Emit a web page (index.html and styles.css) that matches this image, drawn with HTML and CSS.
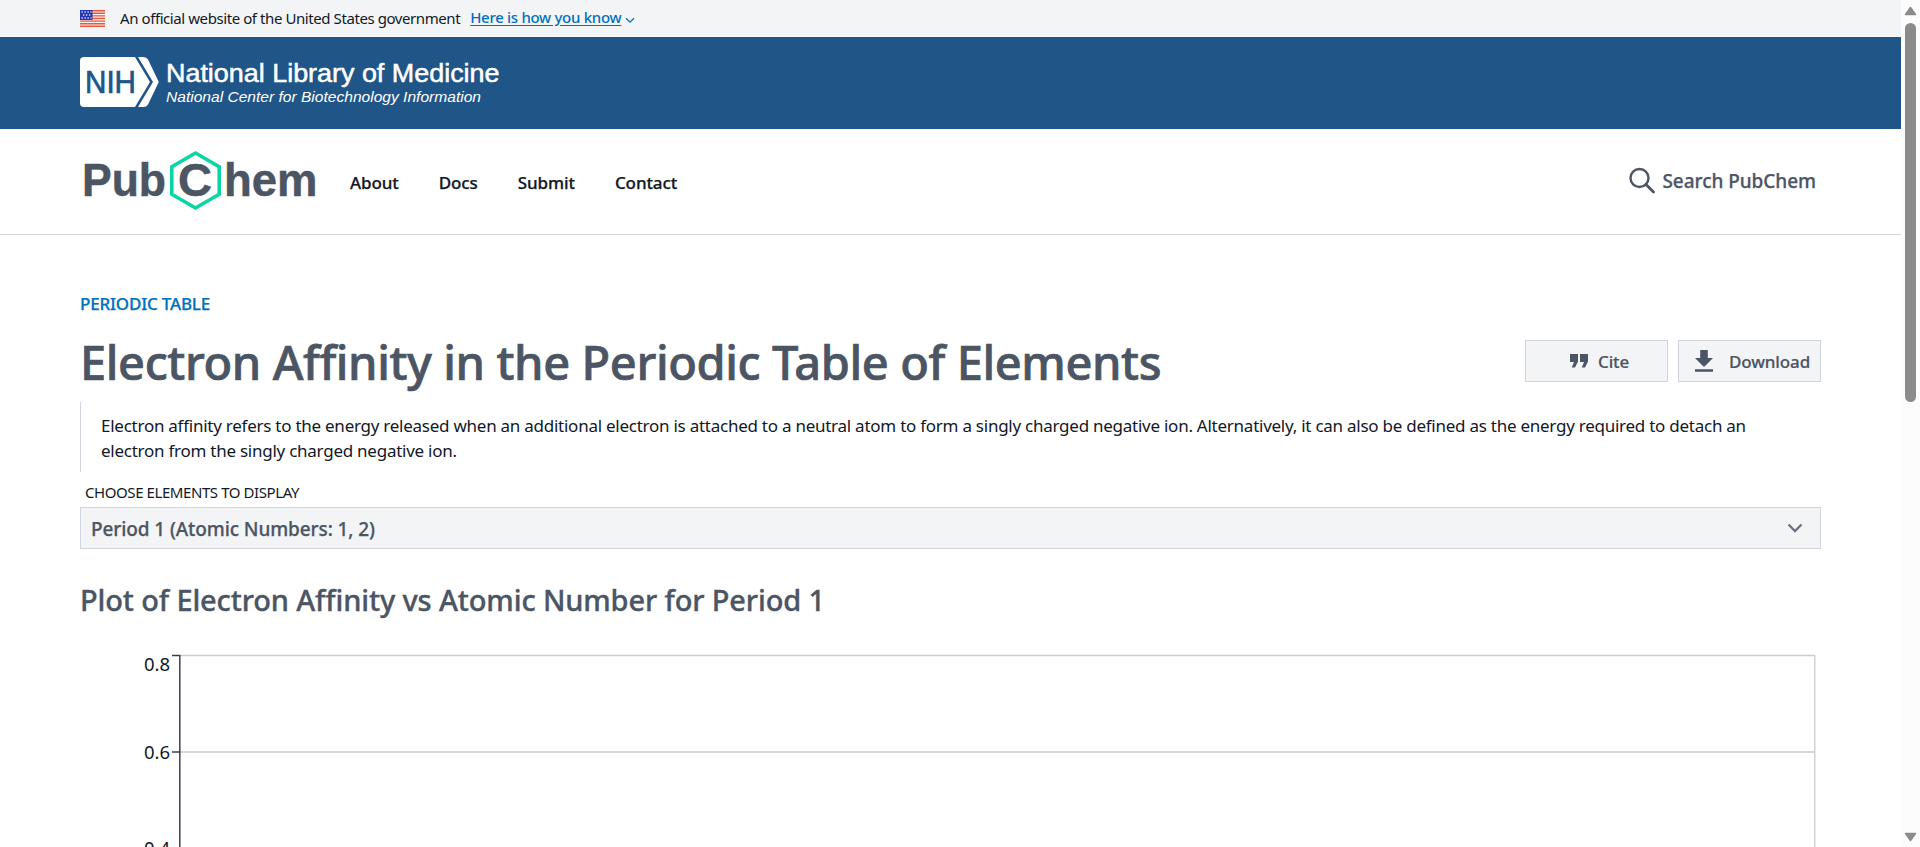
FILE: index.html
```html
<!DOCTYPE html>
<html lang="en">
<head>
<meta charset="utf-8">
<title>Electron Affinity | Periodic Table of Elements | PubChem</title>
<link rel="stylesheet" href="styles.css">
</head>
<body>
<div class="page">
  <div class="gov-banner">
    <svg class="flag" width="25" height="17" viewBox="0 0 25 17">
      <rect width="25" height="17" fill="#fbf3f0"/>
      <path d="M0 .7h25M0 3.3h25M0 5.9h25M0 8.500h25M0 11.1h25M0 13.7h25M0 16.3h25" stroke="#e2593f" stroke-width="1.4"/>
      <rect width="12.500" height="10" fill="#2437b0"/>
      <path d="M1.500 2h10M3 5h8M1.500 8h10" stroke="#dfe3fa" stroke-width="1.3" stroke-dasharray="1.3 1.7"/>
    </svg>
    <span class="gov-text">An official website of the United States government</span>
    <a class="gov-link">Here is how you know</a>
    <svg class="gov-caret" width="10" height="7" viewBox="0 0 10 7"><path d="M1 1.2l4 4 4-4" fill="none" stroke="#0071bc" stroke-width="1.3"/></svg>
  </div>

  <div class="ncbi-bar">
    <svg width="430" height="56" viewBox="0 0 430 56">
      <path d="M4 1h51l15 25L55 51H4a4 4 0 0 1-4-4V5a4 4 0 0 1 4-4z" fill="#fff"/>
      <path d="M58 1H63.500q3 0 4.500 2.500L78.800 26 68 48.500Q66.500 51 63.500 51H58L73 26z" fill="#fff"/>
      <text class="nih" x="5" y="37" textLength="51" lengthAdjust="spacingAndGlyphs">NIH</text>
      <text class="nlm" x="86" y="26" textLength="333.500" lengthAdjust="spacingAndGlyphs">National Library of Medicine</text>
      <text class="ncbi" x="86" y="46" textLength="315" lengthAdjust="spacingAndGlyphs">National Center for Biotechnology Information</text>
    </svg>
  </div>

  <header class="site-header">
    <svg class="logo" width="240" height="62" viewBox="0 0 240 62">
      <text class="wordmark" x="0" y="47" textLength="84" lengthAdjust="spacingAndGlyphs">Pub</text>
      <path d="M113.500 4L137.200 17.700V45.300L113.500 59 89.800 45.300V17.700z" fill="none" stroke="#0ad6a5" stroke-width="3.600"/>
      <text class="wordmark" x="96" y="47" textLength="34" lengthAdjust="spacingAndGlyphs">C</text>
      <text class="wordmark" x="142" y="47" textLength="93.500" lengthAdjust="spacingAndGlyphs">hem</text>
    </svg>
    <nav class="nav"><a>About</a><a>Docs</a><a>Submit</a><a>Contact</a></nav>
    <div class="search">
      <svg width="27" height="27" viewBox="0 0 27 27" fill="none" stroke="#4b5563" stroke-width="2.400"><circle cx="11.500" cy="11" r="9"/><path d="M18 17.500l7.500 7.500" stroke-width="2.800" stroke-linecap="round"/></svg>
      <span>Search PubChem</span>
    </div>
  </header>

  <main class="main">
    <a class="crumb">PERIODIC TABLE</a>
    <div class="title-row">
      <h1>Electron Affinity in the Periodic Table of Elements</h1>
      <div class="actions">
        <button class="btn cite">
          <svg width="18" height="14" viewBox="0 0 18 14" fill="#4b5563"><path d="M0 0h8v7.500L5 13.500H1.800L4 8H0zM10 0h8v7.500l-3 6h-3.200L14 8h-4z"/></svg>
          <span>Cite</span>
        </button>
        <button class="btn download">
          <svg width="18" height="22" viewBox="0 0 18 22" fill="#4b5563"><path d="M5.200 0h7.600v8H18l-9 9-9-9h5.200zM0 19.200h18v2.600H0z"/></svg>
          <span>Download</span>
        </button>
      </div>
    </div>
    <blockquote class="summary">Electron affinity refers to the energy released when an additional electron is attached to a neutral atom to form a singly charged negative ion. Alternatively, it can also be defined as the energy required to detach an<br>electron from the singly charged negative ion.</blockquote>
    <div class="label">CHOOSE ELEMENTS TO DISPLAY</div>
    <div class="select">
      <span>Period 1 (Atomic Numbers: 1, 2)</span>
      <svg width="16" height="10" viewBox="0 0 16 10"><path d="M1.500 1.500L8 8l6.500-6.500" fill="none" stroke="#6b7280" stroke-width="2.300"/></svg>
    </div>
    <h2>Plot of Electron Affinity vs Atomic Number for Period 1</h2>
    <svg class="chart" width="1741" height="227" viewBox="0 0 1741 227">
      <path d="M100 35.500h1635M100 132h1635M1734.800 35v192" fill="none" stroke="#ccc" stroke-width="1.300"/>
      <path d="M92 35.500h7.800V227M92 132h8" fill="none" stroke="#374151" stroke-width="1.500"/>
      <text class="tick" x="90" y="51">0.8</text>
      <text class="tick" x="90" y="139">0.6</text>
      <text class="tick" x="90" y="235">0.4</text>
    </svg>
  </main>
</div>
<div class="scrollbar">
  <svg width="13" height="10" viewBox="0 0 13 10"><path d="M6.500 1.500L11.500 8.500h-10z" fill="#8b8b8b" stroke="#8b8b8b" stroke-width="1.500" stroke-linejoin="round"/></svg>
  <div class="thumb"></div>
  <svg class="down" width="13" height="10" viewBox="0 0 13 10"><path d="M6.500 8.500l5-7h-10z" fill="#8b8b8b" stroke="#8b8b8b" stroke-width="1.500" stroke-linejoin="round"/></svg>
</div>
</body>
</html>
```
FILE: styles.css
```css
* { box-sizing: border-box; }
body {
  margin: 0;
  height: 847px;
  overflow: hidden;
  display: flex;
  background: #fff;
  color: #111827;
  font-family: "Noto Sans", "Open Sans", sans-serif;
}
svg { display: block; flex: none; }
.page { flex: 1; min-width: 0; }

.gov-banner {
  height: 37px;
  padding-left: 80px;
  display: flex;
  align-items: center;
  background: #f3f4f6;
  font-size: 15px;
  line-height: 37px;
  white-space: nowrap;
}
.gov-text { margin-left: 15px; letter-spacing: -0.42px; }
.gov-link {
  margin: -2px 0 0 10px;
  color: #0071bc;
  font-weight: 500;
  letter-spacing: -0.3px;
  text-decoration: underline;
  text-underline-offset: 2px;
}
.gov-caret { margin: 3px 0 0 4px; }

.ncbi-bar { height: 92px; padding: 19px 0 0 80px; background: #205587; }
.ncbi-bar text { font-family: "Liberation Sans", Arial, sans-serif; fill: #fff; }
.ncbi-bar .nih { font-size: 32px; fill: #205587; stroke: #205587; stroke-width: .7px; }
.ncbi-bar .nlm { font-size: 25px; stroke: #fff; stroke-width: .5px; }
.ncbi-bar .ncbi { font-size: 15px; font-style: italic; }

.site-header {
  height: 106px;
  padding: 0 85px 0 82px;
  display: flex;
  align-items: center;
  border-bottom: 1px solid #d1d5db;
}
.wordmark {
  font: bold 46px "Liberation Sans", Arial, sans-serif;
  fill: #4b5563;
  stroke: #4b5563;
  stroke-width: .5px;
}
.logo { margin-top: -3px; }
.nav {
  margin: 2px 0 0 28px;
  display: flex;
  gap: 40px;
  font-size: 17px;
  font-weight: 500;
  letter-spacing: -0.1px;
  -webkit-text-stroke: .25px;
}
.search {
  margin-left: auto;
  display: flex;
  align-items: center;
  gap: 7px;
  color: #4b5563;
  font-size: 19px;
  font-weight: 500;
  letter-spacing: -0.05px;
  line-height: 28px;
  margin-top: -2px;
  -webkit-text-stroke: .25px;
}

.main { padding: 57px 80px 0; }
.crumb {
  display: block;
  color: #0071bc;
  font-size: 17px;
  font-weight: 500;
  line-height: 24px;
  letter-spacing: -0.2px;
  -webkit-text-stroke: .25px;
}
.title-row {
  margin-top: 16px;
  height: 60px;
  display: flex;
  justify-content: space-between;
}
h1, h2 {
  margin: 0;
  color: #4b5563;
  font-weight: 500;
  white-space: nowrap;
}
h1 { font-size: 47px; line-height: 60px; letter-spacing: -0.4px; -webkit-text-stroke: .7px; }
h2 { margin-top: 31px; font-size: 29px; line-height: 40px; letter-spacing: -0.14px; -webkit-text-stroke: .35px; }
.actions { display: flex; gap: 10px; padding-top: 8px; }
.btn {
  width: 143px;
  height: 42px;
  padding: 0;
  display: flex;
  align-items: center;
  border: 1px solid #d1d5db;
  background: #f3f4f6;
  color: #4b5563;
  font: 500 17px "Noto Sans", sans-serif;
  letter-spacing: -0.13px;
  -webkit-text-stroke: .2px;
}
.cite { padding-left: 44px; gap: 10px; }
.download { padding-left: 16px; gap: 16px; }
.download svg { margin-top: -1px; }
.summary {
  margin: 10px 0 0;
  height: 70px;
  padding: 11px 0 0 20px;
  border-left: 1px solid #d1d5db;
  font-size: 17px;
  line-height: 25px;
  letter-spacing: -0.253px;
  white-space: nowrap;
}
.label {
  margin-top: 8px;
  padding-left: 5px;
  font-size: 15px;
  line-height: 24px;
  letter-spacing: -0.42px;
}
.select {
  margin-top: 3px;
  height: 42px;
  padding: 0 17px 0 10px;
  display: flex;
  align-items: center;
  justify-content: space-between;
  border: 1px solid #d1d5db;
  background: #f3f4f6;
  color: #4b5563;
  font-size: 19px;
  font-weight: 500;
  letter-spacing: -0.1px;
  -webkit-text-stroke: .25px;
}
.select span { padding-top: 2px; }
.tick { font-size: 18.5px; fill: #111827; text-anchor: end; }

.scrollbar {
  width: 19px;
  height: 847px;
  padding: 6px 0 5px;
  display: flex;
  flex-direction: column;
  align-items: center;
  background: #fcfcfc;
}
.thumb { width: 11px; height: 379px; margin-top: 7px; border-radius: 6px; background: #8b8b8b; }
.down { margin-top: auto; }
```
